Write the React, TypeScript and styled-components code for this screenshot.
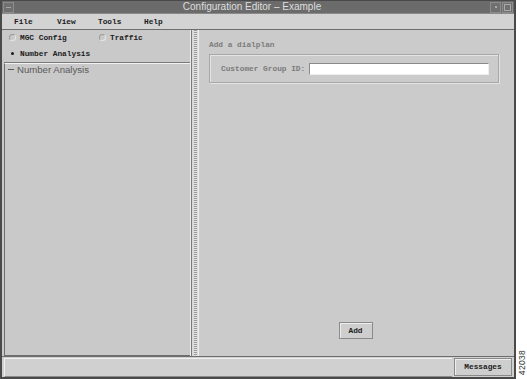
import React, { useState } from 'react';
import styled, { createGlobalStyle } from 'styled-components';

const GlobalStyle = createGlobalStyle`
  html, body {
    margin: 0;
    padding: 0;
    background: #ffffff;
  }
  body {
    width: 527px;
    height: 379px;
    overflow: hidden;
  }
`;

const mono = `"Liberation Mono", "DejaVu Sans Mono", monospace`;
const sans = `"Liberation Sans", Arial, sans-serif`;

const Page = styled.div`
  display: flex;
  width: 527px;
  height: 379px;
`;

const Window = styled.div`
  width: 512px;
  height: 376px;
  flex-shrink: 0;
  border: 2px solid #4a4a4a;
  border-top-width: 1px;
  background: #c9c9c9;
  display: flex;
  flex-direction: column;
`;

const Margin = styled.div`
  flex: 1;
  display: flex;
  align-items: flex-end;
  justify-content: center;
  padding-bottom: 4px;
`;

const FigureNo = styled.span`
  writing-mode: vertical-rl;
  transform: rotate(180deg);
  font-family: ${sans};
  font-size: 8.5px;
  color: #333;
  letter-spacing: 0.3px;
`;

const TitleBar = styled.div`
  height: 12px;
  background: #6b6b6b;
  display: flex;
  align-items: center;
  padding: 0 1px;
  border-bottom: 1px solid #8a8a8a;
`;

const TitleButton = styled.div<{ $gap?: number }>`
  width: 9px;
  height: 9px;
  border: 1px solid #8c8c8c;
  background: #707070;
  display: flex;
  align-items: center;
  justify-content: center;
  margin-left: ${({ $gap }) => $gap ?? 0}px;
`;

const Glyph = styled.div<{ $w: number; $h: number; $border?: boolean }>`
  width: ${({ $w }) => $w}px;
  height: ${({ $h }) => $h}px;
  background: ${({ $border }) => ($border ? 'transparent' : '#a9a9a9')};
  border: ${({ $border }) => ($border ? '1px solid #a9a9a9' : 'none')};
`;

const Title = styled.div`
  flex: 1;
  text-align: center;
  font-family: ${sans};
  font-size: 10px;
  color: #dedede;
  line-height: 12px;
`;

const MenuBar = styled.div`
  height: 15px;
  background: #d3d3d3;
  display: flex;
  align-items: center;
  padding-left: 12px;
  border-bottom: 1px solid #6e6e6e;
`;

const MenuItem = styled.div<{ $w: number }>`
  width: ${({ $w }) => $w}px;
  font-family: ${mono};
  font-weight: bold;
  font-size: 7.8px;
  color: #1c1c1c;
`;

const Main = styled.div`
  flex: 1;
  display: flex;
  padding: 0 0 0 2px;
  min-height: 0;
`;

const LeftPanel = styled.div`
  width: 186px;
  flex-shrink: 0;
  display: flex;
  flex-direction: column;
  border-right: 1px solid #eeeeee;
`;

const RadioGroup = styled.div`
  display: grid;
  grid-template-columns: 90px 1fr;
  grid-template-rows: 15px 17px;
  padding: 0 0 0 5px;
  border-bottom: 1px solid #7a7a7a;
`;

const RadioLabel = styled.label`
  display: flex;
  align-items: center;
  gap: 4px;
  font-family: ${mono};
  font-weight: bold;
  font-size: 7.8px;
  color: #1c1c1c;
  cursor: pointer;
`;

const RadioDot = styled.span<{ $on: boolean }>`
  width: 7px;
  height: 7px;
  border-radius: 50%;
  box-sizing: border-box;
  border: 1px solid ${({ $on }) => ($on ? 'transparent' : '#e6e6e6')};
  border-top-color: ${({ $on }) => ($on ? 'transparent' : '#9a9a9a')};
  border-left-color: ${({ $on }) => ($on ? 'transparent' : '#9a9a9a')};
  display: flex;
  align-items: center;
  justify-content: center;
  &::after {
    content: '';
    width: 3px;
    height: 3px;
    border-radius: 50%;
    background: ${({ $on }) => ($on ? '#1c1c1c' : 'transparent')};
  }
`;

const TreeFrame = styled.div`
  flex: 1;
  border-top: 1px solid #f2f2f2;
  border-bottom: 1px solid #6e6e6e;
  border-left: 1px solid #6e6e6e;
  padding: 0 0 0 3px;
`;

const TreeNode = styled.div`
  display: flex;
  align-items: center;
  gap: 3px;
  font-family: ${sans};
  font-size: 9.6px;
  color: #5a5a5a;
  line-height: 11px;
`;

const Collapse = styled.span`
  width: 6px;
  height: 1px;
  background: #5a5a5a;
`;

const Splitter = styled.div`
  width: 6px;
  flex-shrink: 0;
  border-left: 1px solid #7a7a7a;
  border-right: 1px solid #f0f0f0;
  background-color: #dadada;
  background-image: repeating-linear-gradient(
    to bottom,
    #9a9a9a 0px,
    #9a9a9a 1px,
    #e2e2e2 1px,
    #e2e2e2 2px
  );
  background-size: 3px 100%;
  background-repeat: no-repeat;
  background-position: 2px 0;
`;

const RightPanel = styled.div`
  flex: 1;
  min-width: 0;
  display: flex;
  flex-direction: column;
  padding: 11px 0 17px 10px;
  background: #cbcbcb;
`;

const SectionTitle = styled.div`
  font-family: ${mono};
  font-weight: bold;
  font-size: 7.8px;
  color: #7c7c7c;
  height: 11px;
  margin-bottom: 2px;
`;

const GroupBox = styled.div`
  width: 290px;
  height: 29px;
  box-sizing: border-box;
  border: 1px solid #a8a8a8;
  box-shadow: inset 1px 1px 0 #e4e4e4, 1px 1px 0 #e4e4e4;
  display: flex;
  align-items: center;
  padding-left: 11px;
  gap: 4px;
`;

const FieldLabel = styled.label`
  font-family: ${mono};
  font-weight: bold;
  font-size: 7.8px;
  color: #7c7c7c;
`;

const TextInput = styled.input`
  width: 176px;
  height: 10px;
  box-sizing: content-box;
  padding: 0 1px;
  border: 1px solid #8a8a8a;
  border-right-color: #eeeeee;
  border-bottom-color: #eeeeee;
  background: #ffffff;
  outline: none;
  font-family: ${mono};
  font-size: 8px;
`;

const Spacer = styled.div`
  flex: 1;
`;

const ButtonRow = styled.div`
  display: flex;
  justify-content: center;
  padding-right: 12px;
`;

const PushButton = styled.button<{ $w: number; $h: number }>`
  width: ${({ $w }) => $w}px;
  height: ${({ $h }) => $h}px;
  flex-shrink: 0;
  padding: 0;
  background: #cecece;
  border: 1px solid #8a8a8a;
  box-shadow: inset 1px 1px 0 #eeeeee;
  font-family: ${mono};
  font-weight: bold;
  font-size: 7.8px;
  color: #1c1c1c;
  cursor: pointer;
`;

const StatusBar = styled.div`
  height: 19px;
  display: flex;
  gap: 2px;
  padding: 1px 2px 0 2px;
  border-top: 1px solid #6e6e6e;
  background: #d0d0d0;
`;

const StatusField = styled.div`
  flex: 1;
  border-top: 1px solid #f0f0f0;
  border-left: 1px solid #f0f0f0;
  border-bottom: 1px solid #8a8a8a;
`;

export default function App() {
  const [mode, setMode] = useState('number');
  const [groupId, setGroupId] = useState('');

  return (
    <Page>
      <GlobalStyle />
      <Window>
        <TitleBar>
          <TitleButton>
            <Glyph $w={5} $h={1} />
          </TitleButton>
          <Title>Configuration Editor – Example</Title>
          <TitleButton>
            <Glyph $w={2} $h={2} />
          </TitleButton>
          <TitleButton $gap={1}>
            <Glyph $w={5} $h={5} $border />
          </TitleButton>
        </TitleBar>

        <MenuBar>
          <MenuItem $w={43}>File</MenuItem>
          <MenuItem $w={41}>View</MenuItem>
          <MenuItem $w={46}>Tools</MenuItem>
          <MenuItem $w={40}>Help</MenuItem>
        </MenuBar>

        <Main>
          <LeftPanel>
            <RadioGroup>
              <RadioLabel onClick={() => setMode('mgc')}>
                <RadioDot $on={mode === 'mgc'} />
                MGC Config
              </RadioLabel>
              <RadioLabel onClick={() => setMode('traffic')}>
                <RadioDot $on={mode === 'traffic'} />
                Traffic
              </RadioLabel>
              <RadioLabel onClick={() => setMode('number')}>
                <RadioDot $on={mode === 'number'} />
                Number Analysis
              </RadioLabel>
            </RadioGroup>
            <TreeFrame>
              <TreeNode>
                <Collapse />
                Number Analysis
              </TreeNode>
            </TreeFrame>
          </LeftPanel>

          <Splitter />

          <RightPanel>
            <SectionTitle>Add a dialplan</SectionTitle>
            <GroupBox>
              <FieldLabel htmlFor="cgid">Customer Group ID:</FieldLabel>
              <TextInput id="cgid" value={groupId} onChange={(e) => setGroupId(e.target.value)} />
            </GroupBox>
            <Spacer />
            <ButtonRow>
              <PushButton $w={34} $h={17}>Add</PushButton>
            </ButtonRow>
          </RightPanel>
        </Main>

        <StatusBar>
          <StatusField />
          <PushButton $w={58} $h={18}>Messages</PushButton>
        </StatusBar>
      </Window>
      <Margin>
        <FigureNo>42038</FigureNo>
      </Margin>
    </Page>
  );
}
